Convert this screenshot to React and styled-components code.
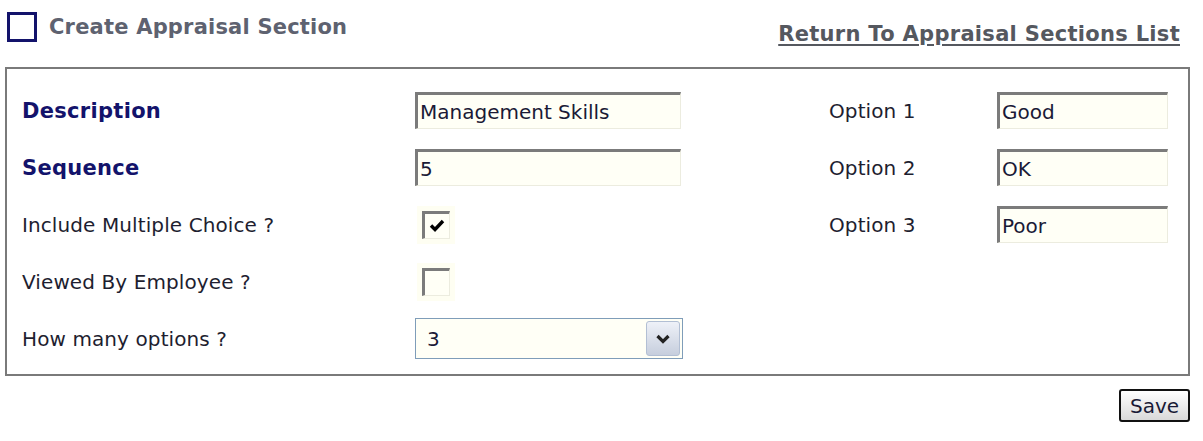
import React from "react";
import styled, { createGlobalStyle } from "styled-components";

const GlobalStyle = createGlobalStyle`
  html, body {
    margin: 0;
    padding: 0;
    background: #ffffff;
    font-family: "DejaVu Sans", Verdana, sans-serif;
  }
`;

export default function App() {
  return (
    <>
      <GlobalStyle />
      <SPage>
        <SHeader>
          <STitleWrap>
            <STitleBox />
            <STitle>Create Appraisal Section</STitle>
          </STitleWrap>
          <SLink href="#">Return To Appraisal Sections List</SLink>
        </SHeader>

        <SPanel>
          <SLabel $bold>Description</SLabel>
          <STextInput defaultValue="Management Skills" />
          <SLabel>Option 1</SLabel>
          <SOptInput defaultValue="Good" />

          <SLabel $bold>Sequence</SLabel>
          <STextInput defaultValue="5" />
          <SLabel>Option 2</SLabel>
          <SOptInput defaultValue="OK" />

          <SLabel>Include Multiple Choice ?</SLabel>
          <SCheckCell>
            <SCheck>
              <svg width="16" height="14" viewBox="0 0 16 14">
                <path d="M2 6.5 L6 10.5 L14 2" fill="none" stroke="#000" strokeWidth="3.4" />
              </svg>
            </SCheck>
          </SCheckCell>
          <SLabel>Option 3</SLabel>
          <SOptInput defaultValue="Poor" />

          <SLabel>Viewed By Employee ?</SLabel>
          <SCheckCell>
            <SCheck />
          </SCheckCell>
          <SEmpty />
          <SEmpty />

          <SLabel>How many options ?</SLabel>
          <SSelect>
            <SSelectValue>3</SSelectValue>
            <SSelectButton>
              <svg width="16" height="10" viewBox="0 0 16 10">
                <path d="M2.5 2 L8 7.5 L13.5 2" fill="none" stroke="#222" strokeWidth="3.2" />
              </svg>
            </SSelectButton>
          </SSelect>
          <SEmpty />
          <SEmpty />
        </SPanel>

        <SFooter>
          <SSave>Save</SSave>
        </SFooter>
      </SPage>
    </>
  );
}

const SPage = styled.div`
  width: 1203px;
  padding: 0 13px 0 5px;
  box-sizing: border-box;
`;

const SHeader = styled.div`
  display: flex;
  justify-content: space-between;
  align-items: flex-start;
  height: 67px;
`;

const STitleWrap = styled.div`
  display: flex;
  align-items: center;
  gap: 12px;
  padding: 12px 0 0 2px;
`;

const STitleBox = styled.div`
  width: 24px;
  height: 24px;
  border: 3px solid #13136b;
`;

const STitle = styled.span`
  font-size: 21px;
  font-weight: 700;
  color: #5e6270;
  letter-spacing: 0.2px;
`;

const SLink = styled.a`
  margin: 22px 10px 0 0;
  font-size: 21px;
  font-weight: 700;
  color: #55585f;
  text-decoration: underline;
  text-underline-offset: 3px;
  letter-spacing: 0.3px;
`;

const SPanel = styled.div`
  display: grid;
  grid-template-columns: 393px 414px 168px 171px;
  grid-auto-rows: 57px;
  align-items: center;
  padding: 13px 0 10px 15px;
  border: 2px solid #7a7a7a;
  height: 309px;
  box-sizing: border-box;
`;

const SLabel = styled.div`
  font-size: ${(p) => (p.$bold ? "21px" : "20px")};
  font-weight: ${(p) => (p.$bold ? 700 : 400)};
  color: ${(p) => (p.$bold ? "#13136b" : "#1e1e30")};
  letter-spacing: ${(p) => (p.$bold ? "0.3px" : "0.1px")};
`;

const STextInput = styled.input`
  width: 266px;
  height: 37px;
  box-sizing: border-box;
  padding: 0 4px 0 2px;
  border-style: solid;
  border-width: 3px 1px 1px 3px;
  border-color: #7b7b7b #ececdf #ececdf #7b7b7b;
  background: #fffff6;
  font-family: "DejaVu Sans", Verdana, sans-serif;
  font-size: 20px;
  color: #1a1a36;
  outline: none;
`;

const SOptInput = styled(STextInput)`
  width: 171px;
`;

const SCheckCell = styled.div`
  display: flex;
  align-items: center;
  justify-content: flex-start;
`;

const SCheck = styled.div`
  width: 28px;
  height: 28px;
  margin-left: 7px;
  box-sizing: border-box;
  display: flex;
  align-items: center;
  justify-content: center;
  border-style: solid;
  border-width: 3px 1px 1px 3px;
  border-color: #7b7b7b #ececdf #ececdf #7b7b7b;
  background: #fffff6;
  box-shadow: 0 0 0 5px #fefef2;
`;

const SEmpty = styled.div``;

const SSelect = styled.div`
  width: 268px;
  height: 41px;
  box-sizing: border-box;
  display: flex;
  align-items: center;
  justify-content: space-between;
  border: 1px solid #7f9db9;
  background: #fffff6;
  padding: 1px 2px 1px 11px;
`;

const SSelectValue = styled.span`
  font-size: 20px;
  color: #1a1a36;
`;

const SSelectButton = styled.div`
  width: 34px;
  height: 35px;
  box-sizing: border-box;
  display: flex;
  align-items: center;
  justify-content: center;
  border: 1px solid #b2bfd4;
  border-radius: 3px;
  background: linear-gradient(#eef1f8, #c6cedd);
`;

const SFooter = styled.div`
  display: flex;
  justify-content: flex-end;
  padding-top: 13px;
`;

const SSave = styled.button`
  width: 71px;
  height: 33px;
  box-sizing: border-box;
  border: 2px solid #111;
  border-radius: 3px;
  background: linear-gradient(#ffffff, #d9d9d9);
  font-family: "DejaVu Sans", Verdana, sans-serif;
  font-size: 20px;
  color: #1a1a36;
  padding: 0;
`;
